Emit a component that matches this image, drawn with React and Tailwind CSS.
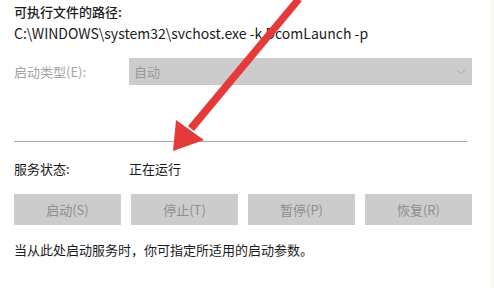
export default function App() {
  const buttons = ["启动(S)", "停止(T)", "暂停(P)", "恢复(R)"];

  return (
    <div className="relative w-[494px] h-[288px] overflow-hidden bg-white font-['Noto_Sans_CJK_SC',sans-serif] text-[13px] text-[#1b1b1b]">
      <div className="flex flex-col pl-[14px] pr-[22px] pt-[2px]">
        {/* 路径 */}
        <div className="h-[19px] leading-[19px] font-medium">可执行文件的路径:</div>
        <div className="mt-[3px] h-[19px] leading-[19px] text-[14px]">
          C:\WINDOWS\system32\svchost.exe -k DcomLaunch -p
        </div>

        {/* 启动类型 */}
        <div className="mt-[15px] flex items-center h-[27px]">
          <div className="w-[115px] text-[#a3a3a3]">启动类型(E):</div>
          <div className="flex-1 h-full bg-[#cccccc] flex items-center justify-between pl-[5px] pr-[6px] text-[#9a9a9a]">
            <span>自动</span>
            <svg width="10" height="6" viewBox="0 0 10 6" className="text-[#b4b4b4]">
              <path d="M1 1l4 4 4-4" fill="none" stroke="currentColor" strokeWidth="1.2" />
            </svg>
          </div>
        </div>

        <div className="mt-[56px] h-px bg-[#a8a8a8] mr-[5px]" />

        {/* 服务状态 */}
        <div className="mt-[17px] flex items-center h-[19px]">
          <div className="w-[115px]">服务状态:</div>
          <div>正在运行</div>
        </div>

        <div className="mt-[16px] flex gap-[10px] h-[31px]">
          {buttons.map((b) => (
            <div
              key={b}
              className="flex-1 bg-[#cccccc] flex items-center justify-center text-[#8d8d8d]"
            >
              {b}
            </div>
          ))}
        </div>

        <div className="mt-[15px] h-[19px] leading-[19px]">
          当从此处启动服务时，你可指定所适用的启动参数。
        </div>
      </div>

      <div className="absolute top-0 right-0 w-[4px] h-full bg-[#fbf9f0]" />

      {/* 红色箭头 */}
      <svg className="absolute left-0 top-0" width="494" height="288" viewBox="0 0 494 288">
        <path d="M295 -2 L302 1 L194 131 L188 126 Z" fill="#e53a3a" />
        <polygon points="173,151 176,120 204,140" fill="#e53a3a" />
      </svg>
    </div>
  );
}
